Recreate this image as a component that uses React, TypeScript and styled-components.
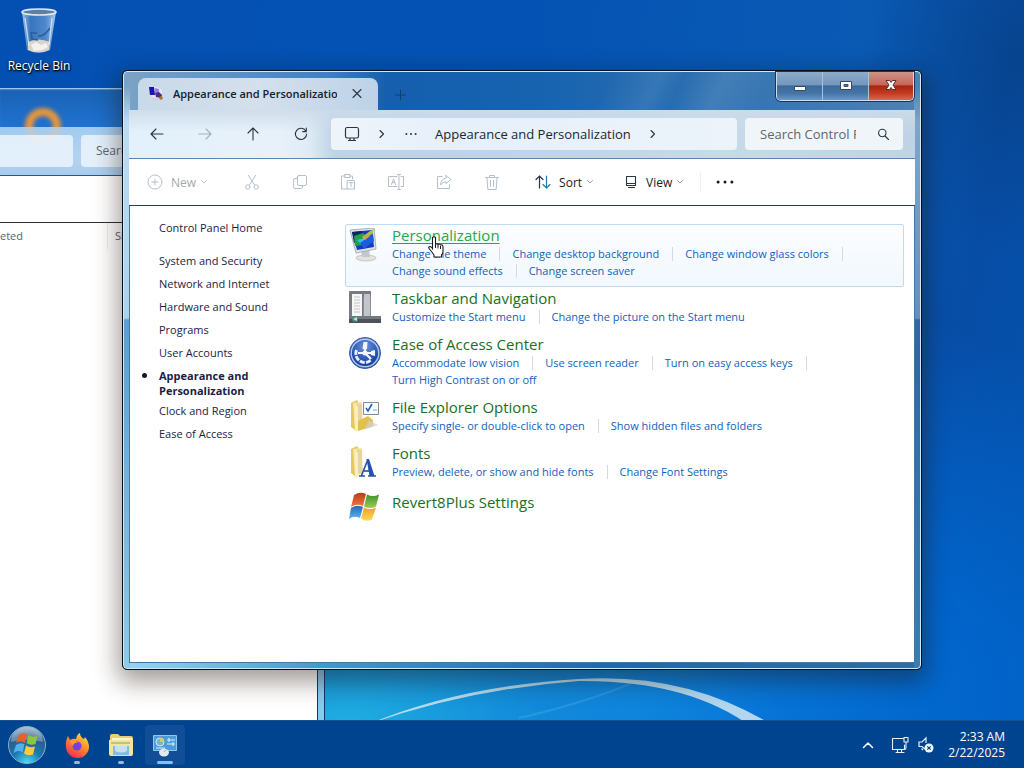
import React from "react";
import styled, { createGlobalStyle } from "styled-components";

const GlobalStyle = createGlobalStyle`
  *, *::before, *::after { box-sizing: border-box; }
  body { margin: 0; font-family: "Open Sans", "Noto Sans", sans-serif; font-size: 11px; color: #1a1a1a; }
  button { font: inherit; color: inherit; border: 0; padding: 0; background: none; }
  a { text-decoration: none; color: inherit; }
  svg { display: block; flex: none; }
`;

/* ---------- desktop ---------- */

const Desktop = styled.div`
  position: relative;
  display: flex;
  flex-direction: column;
  min-height: 100vh;
  overflow: hidden;
  background:
    radial-gradient(ellipse 42% 26% at 34% 94%, #20aee0 0%, rgba(24, 150, 220, 0.6) 45%, rgba(0, 110, 215, 0) 100%),
    radial-gradient(ellipse 66% 56% at 62% 92%, #0a7cdc 0%, rgba(0, 106, 212, 0.8) 50%, rgba(0, 90, 190, 0) 100%),
    radial-gradient(ellipse 16% 26% at 100% 8%, rgba(8, 56, 112, 0.45) 0%, rgba(8, 70, 140, 0) 100%),
    linear-gradient(100deg, #0450b2 0%, #0453b4 45%, #0a5ab4 75%, #074da6 88%, #0453ae 100%);
`;

const Swoosh = styled.svg`
  position: absolute;
  left: 36%;
  bottom: 40px;
  width: 42%;
  height: 60px;
`;

const Workspace = styled.main`
  position: relative;
  flex: 1;
`;

const DesktopIcon = styled.button`
  position: absolute;
  left: 0;
  top: 6px;
  width: 78px;
  display: flex;
  flex-direction: column;
  align-items: center;
  gap: 3px;
  color: #fff;
  font-size: 12px;
  line-height: 16px;
  white-space: nowrap;
  text-shadow: 0 1px 2px #000, 1px 1px 2px #000;
`;

/* ---------- window behind ---------- */

const BackWindow = styled.section`
  position: absolute;
  left: 0;
  top: 88px;
  bottom: 0;
  width: 325px;
  display: flex;
  flex-direction: column;
  border-top: 1px solid #9cc6ee;
  border-right: 1px solid #0c3b66;
  padding-right: 6px;
  background: linear-gradient(90deg, #4fa6d8, #86cdea);
`;

const BackTitle = styled.div`
  height: 38px;
  margin-right: -6px;
  background: linear-gradient(180deg, #1a62b4, #1f72d0);
  box-shadow: inset 0 1px 1px rgba(255, 255, 255, 0.25);
`;

const BackAddress = styled.div`
  position: relative;
  height: 49px;
  display: flex;
  align-items: center;
  gap: 8px;
  background: linear-gradient(180deg, rgba(178, 210, 244, 0.8), rgba(200, 220, 246, 0.8) 60%, rgba(184, 210, 240, 0.85));
  border-bottom: 1px solid #24588c;
`;

const BackField = styled.div<{ $grow?: boolean }>`
  height: 32px;
  width: ${(p) => (p.$grow ? "160px" : "73px")};
  border-radius: ${(p) => (p.$grow ? "4px" : "0 4px 4px 0")};
  background: rgba(240, 247, 254, 0.8);
  padding: 0 15px;
  color: #5c6670;
  font-size: 12px;
  line-height: 32px;
`;

const BackCommands = styled.div`
  height: 47px;
  background: #fff;
  border-bottom: 1px solid #24303c;
`;

const BackColumns = styled.div`
  flex: 1;
  display: flex;
  background: #fff;
  border-right: 1px solid #0c3b66;
  color: #5a636c;
  line-height: 26px;
`;

const BackColumn = styled.span<{ $first?: boolean }>`
  width: ${(p) => (p.$first ? "108px" : "auto")};
  padding-left: ${(p) => (p.$first ? "0" : "7px")};
  height: 26px;
  border-right: ${(p) => (p.$first ? "1px solid #ececec" : "0")};
`;

const Ring = styled.svg`
  position: absolute;
  left: 18px;
  top: 12px;
  filter: blur(2px);
`;

/* ---------- front window ---------- */

const Window = styled.section`
  position: absolute;
  left: 122px;
  right: 102px;
  top: 70px;
  bottom: 50px;
  display: flex;
  border: 1px solid #04101f;
  border-radius: 5px;
  background: #04101f;
  box-shadow: 0 8px 24px 4px rgba(30, 16, 8, 0.42);
`;

const Glass = styled.div`
  flex: 1;
  min-width: 0;
  display: flex;
  flex-direction: column;
  padding: 6px 5px 5px;
  border: 1px solid #cfe9f8;
  border-radius: 4px;
  background:
    linear-gradient(180deg, rgba(160, 200, 228, 0) 14px, #bcdcf2 50px, #a9d2f0 246px, #5e9ed0 248px, #8ecbe6 100%) left / 6px 100% no-repeat,
    linear-gradient(180deg, rgba(160, 200, 228, 0) 14px, #7ea6c8 50px, #5f92c4 246px, #2c68a4 248px, #3a7eb0 100%) right / 6px 100% no-repeat,
    linear-gradient(90deg, #9ad6f0, #3d9cc8 25%, #1a6cae 60%, #2a6ea6) bottom / 100% 6px no-repeat,
    linear-gradient(115deg, rgba(255, 255, 255, 0) 60%, rgba(255, 255, 255, 0.08) 66%, rgba(255, 255, 255, 0) 69%, rgba(255, 255, 255, 0.1) 74%, rgba(255, 255, 255, 0.02) 80%) top / 100% 40px no-repeat,
    linear-gradient(90deg, #7ba3c6 0%, #5f93c8 12%, #3f7fc0 26%, #155fae 33%, #1763b0 52%, #2d70b0 75%, #4a7fb2 100%);
`;

const TitleBar = styled.header`
  display: flex;
  align-items: flex-start;
  height: 32px;
  padding: 0 1px 0 9px;
`;

const Tab = styled.div`
  width: 240px;
  height: 32px;
  display: flex;
  align-items: center;
  padding: 0 13px 0 10px;
  border-radius: 8px 8px 0 0;
  background: linear-gradient(90deg, #c9d9e8, #d4e0ec 50%, #bdd2e8);
`;

const TabTitle = styled.span`
  flex: 1;
  margin: 0 12px 0 9px;
  overflow: hidden;
  white-space: nowrap;
  font-weight: 600;
  line-height: 18px;
  color: #13202e;
`;

const NewTab = styled.button`
  margin: 10px 0 0 15px;
`;

const Captions = styled.div`
  display: flex;
  margin: -6px 0 0 auto;
  height: 29px;
  border: 1px solid #cfdfee;
  border-top: 0;
  border-radius: 0 0 5px 5px;
  overflow: hidden;
  box-shadow: 0 0 0 1px #17365a;
`;

const Caption = styled.button<{ $close?: boolean }>`
  width: ${(p) => (p.$close ? "44px" : "46px")};
  display: grid;
  place-items: center;
  border-right: ${(p) => (p.$close ? "0" : "1px solid #a9c2da")};
  background: ${(p) =>
    p.$close
      ? "linear-gradient(180deg, #cf9388 0%, #c4685a 45%, #a8250f 50%, #c33a20 75%, #d9684a 100%)"
      : "linear-gradient(180deg, #8fabc8 0%, #7497bd 45%, #3c6a9c 50%, #4474a6 75%, #6d97c0 100%)"};
`;

const Client = styled.div`
  flex: 1;
  min-width: 0;
  display: flex;
  flex-direction: column;
  background: #fff;
`;

const AddressRow = styled.div`
  height: 49px;
  display: flex;
  align-items: center;
  padding: 0 12px 0 4px;
  border-bottom: 1px solid #5d86ad;
  background:
    linear-gradient(180deg, rgba(205, 219, 233, 0.9), rgba(255, 255, 255, 0) 22px),
    linear-gradient(90deg, #e2f1fc 0, #e8f1f9 150px, #deebf6 180px, #bfd3e6 205px, #bfd4e9 55%, #c8d9e8 75%, #c0d3e4 100%);
`;

const NavButton = styled.button`
  width: 48px;
  height: 32px;
  display: grid;
  place-items: center;
`;

const AddressBox = styled.nav`
  flex: 1;
  min-width: 0;
  height: 32px;
  margin: 0 8px 0 6px;
  padding: 0 13px;
  display: flex;
  align-items: center;
  border-radius: 4px;
  background: linear-gradient(90deg, #eef4fa, #e6f0fb 30%, #ecf3fa);
  white-space: nowrap;
`;

const CrumbArrow = styled.span`
  margin-left: 18px;
`;

const Crumb = styled.button`
  margin: 0 0 0 15px;
  font-size: 13px;
  line-height: 18px;
  color: #1a2733;
`;

const More = styled.button`
  margin-left: 16px;
`;

const SearchBox = styled.label`
  width: 158px;
  height: 32px;
  display: flex;
  align-items: center;
  gap: 20px;
  padding: 0 13px 0 15px;
  border-radius: 4px;
  background: #f0f5fa;
`;

const SearchInput = styled.input`
  width: 98px;
  min-width: 0;
  border: 0;
  outline: 0;
  padding: 0;
  background: transparent;
  font: inherit;
  font-size: 13px;
  &::placeholder { color: #5c6770; opacity: 1; }
`;

const CommandRow = styled.div`
  height: 47px;
  display: flex;
  align-items: center;
  padding: 0 12px;
  background: #fff;
  border-bottom: 1px solid #2c3e52;
`;

const Command = styled.button<{ $kind: "icon" | "label"; $off?: boolean }>`
  width: ${(p) => (p.$kind === "icon" ? "48px" : "auto")};
  height: 32px;
  display: flex;
  align-items: center;
  justify-content: center;
  padding: ${(p) => (p.$kind === "icon" ? "0" : "0 6px")};
  font-size: 12px;
  color: ${(p) => (p.$off ? "#a3a9ae" : "#1a1a1a")};
`;

const CommandText = styled.span`
  margin: 0 4px 0 8px;
`;

const NewCommand = styled(Command)`
  margin-right: 14px;
`;

const SortCommand = styled(Command)`
  margin: 0 18px 0 13px;
`;

const Divider = styled.span`
  width: 1px;
  height: 20px;
  margin-left: 10px;
  background: #eef0f2;
`;

const Body = styled.div`
  flex: 1;
  display: flex;
  border: 1px solid #3f79a8;
  border-top: 0;
`;

const Sidebar = styled.nav`
  width: 205px;
  flex: none;
  padding: 14px 0 0 29px;
`;

const SideList = styled.ul`
  list-style: none;
  margin: 18px 0 0;
  padding: 0;
  display: flex;
  flex-direction: column;
  gap: 8px;
`;

const SideLink = styled.a<{ $current?: boolean }>`
  position: relative;
  display: block;
  width: 120px;
  line-height: 15px;
  color: #1c1c44;
  font-weight: ${(p) => (p.$current ? 700 : 400)};
  margin-bottom: ${(p) => (p.$current ? "-3px" : "0")};
  &::before {
    content: "";
    display: ${(p) => (p.$current ? "block" : "none")};
    position: absolute;
    left: -17px;
    top: 5px;
    width: 5px;
    height: 5px;
    border-radius: 50%;
    background: #15152c;
  }
`;

const Content = styled.div`
  flex: 1;
  min-width: 0;
  padding: 18px 10px 0;
`;

const Category = styled.article<{ $hover?: boolean; $single?: boolean }>`
  position: relative;
  display: flex;
  gap: 11px;
  padding: ${(p) => (p.$single ? "3px 3px 7px" : "0 3px 7px")};
  border: 1px solid ${(p) => (p.$hover ? "#c0dbf0" : "transparent")};
  border-radius: 2px;
  background: ${(p) => (p.$hover ? "linear-gradient(180deg, #fcfdff, #f1f8fe)" : "none")};
`;

const CategoryIcon = styled.div<{ $single?: boolean }>`
  width: 32px;
  height: 32px;
  margin: ${(p) => (p.$single ? "0" : "3px 0 -8px")};
`;

const CategoryTitle = styled.a<{ $hover?: boolean }>`
  display: block;
  width: max-content;
  font-size: 15px;
  line-height: 20px;
  color: ${(p) => (p.$hover ? "#2aa648" : "#1a6f22")};
  text-decoration: ${(p) => (p.$hover ? "underline" : "none")};
  text-decoration-thickness: 1px;
  text-underline-offset: 2px;
`;

const Tasks = styled.ul`
  list-style: none;
  margin: 0;
  padding: 0;
  display: flex;
  flex-wrap: wrap;
`;

const Task = styled.li`
  display: flex;
  align-items: center;
  line-height: 17px;
  color: #0f62bc;
  white-space: nowrap;
  &:not(:last-child)::after {
    content: "";
    width: 1px;
    height: 14px;
    margin: 0 12px 0 13px;
    background: #d5dae0;
  }
`;

const Pointer = styled.svg`
  position: absolute;
  left: 81px;
  top: 10px;
`;

/* ---------- taskbar ---------- */

const Taskbar = styled.footer`
  position: relative;
  height: 48px;
  display: flex;
  align-items: center;
  padding: 0 19px 0 7px;
  background: #00438f;
  border-top: 1px solid #174f8f;
  color: #fff;
`;

const TaskButton = styled.button<{ $active?: boolean; $open?: boolean }>`
  position: relative;
  width: 40px;
  height: 40px;
  margin: 0 2px;
  display: grid;
  place-items: center;
  border-radius: 4px;
  background: ${(p) => (p.$active ? "#124e98" : "none")};
  &::after {
    content: "";
    display: ${(p) => (p.$open ? "block" : "none")};
    position: absolute;
    bottom: 1px;
    left: 50%;
    transform: translateX(-50%);
    width: ${(p) => (p.$active ? "16px" : "6px")};
    height: 3px;
    border-radius: 2px;
    background: ${(p) => (p.$active ? "#7cc4f4" : "#9cb8d8")};
  }
`;

const StartButton = styled.button`
  margin-right: 8px;
`;

const Tray = styled.div`
  margin-left: auto;
  display: flex;
  align-items: center;
`;

const TrayButton = styled.button`
  width: 26px;
  height: 32px;
  display: grid;
  place-items: center;
`;

const TrayChevron = styled(TrayButton)`
  margin-right: 6px;
`;

const Clock = styled.time`
  margin-left: 9px;
  text-align: right;
  font-size: 12px;
  line-height: 16px;
`;

/* ---------- drawings ---------- */

const Line = ({ d, w = 16, h = 16, c = "#2a3642", sw = 1.1 }: { d: string; w?: number; h?: number; c?: string; sw?: number }) => (
  <svg width={w} height={h} viewBox={`0 0 ${w} ${h}`} fill="none" stroke={c} strokeWidth={sw} strokeLinecap="round" strokeLinejoin="round" aria-hidden="true">
    <path d={d} />
  </svg>
);

const Chevron = ({ c = "#9aa1a8" }: { c?: string }) => <Line w={8} h={8} c={c} sw={1} d="M1.500 2.500 4 5 6.500 2.500" />;

const Dots = ({ r = 1, c = "#2a3642" }: { r?: number; c?: string }) => (
  <svg width="18" height="8" viewBox="0 0 18 8" fill={c} aria-hidden="true">
    <circle cx={9 - r * 4.600} cy="4" r={r} />
    <circle cx="9" cy="4" r={r} />
    <circle cx={9 + r * 4.600} cy="4" r={r} />
  </svg>
);

const BinIcon = () => (
  <svg width="40" height="49" viewBox="0 0 40 49" aria-hidden="true">
    <defs>
      <linearGradient id="bin" x1="0" x2="1">
        <stop offset="0" stopColor="#b8d4ee" stopOpacity=".9" />
        <stop offset=".25" stopColor="#4f86c4" stopOpacity=".7" />
        <stop offset=".7" stopColor="#6fa0d6" stopOpacity=".7" />
        <stop offset="1" stopColor="#c4dcf2" stopOpacity=".9" />
      </linearGradient>
    </defs>
    <path d="M3 6 8 44q12 6 23 0L37 6Z" fill="url(#bin)" />
    <path d="M9 36q10-5 22 0l-1 8q-11 5-21 0Z" fill="#d8d4cc" />
    <path d="m12 39 5-3 5 3 5-2 2 4-6 3-8 1Z" fill="#f4f2ee" />
    <path d="M31 22q-6 9-12 8M12 26l1 7 6 1M12 27h6" fill="none" stroke="#2b5c9e" strokeWidth="1.500" />
    <path d="M6 12 10 40M33 12l-3 27" stroke="#e4f0fa" strokeWidth="1.200" opacity=".8" />
    <ellipse cx="20" cy="6" rx="17" ry="3" fill="#5d7fa4" stroke="#dfeaf4" strokeWidth="1.600" />
  </svg>
);

const TabIcon = () => (
  <svg width="16" height="16" viewBox="0 0 16 16" aria-hidden="true">
    <path d="M1 1h8l5 3-1 7-9 1Z" fill="#e9e4f2" />
    <path d="M1 1h5l1 8H2Z" fill="#1c12b4" />
    <path d="m7 2 4 1v4H7Z" fill="#8d86e0" />
    <path d="m7 7 4-1 3 3-1 3-5-1Z" fill="#4b2b84" />
    <circle cx="13" cy="12" r="1.800" fill="#b3702c" />
    <path d="m4 11 6 2v2l-5-1Z" fill="#cfcfda" />
  </svg>
);

const PersonalizationIcon = () => (
  <svg width="32" height="34" viewBox="0 0 32 34" aria-hidden="true">
    <ellipse cx="17" cy="30" rx="10" ry="3" fill="#e2e2e2" stroke="#bcbcbc" strokeWidth=".8" />
    <path d="m12 22 8-1 1 8h-8Z" fill="#c4c8cc" />
    <path d="M1 2 25 0l2 21-20 4Z" fill="#dfe3e8" stroke="#9aa2aa" strokeWidth=".8" />
    <path d="M3 4 23 2l2 17-17 3Z" fill="#1238c4" />
    <path d="m3 4 10-1 3 9-11 3Z" fill="#092a5c" />
    <path d="m5 8 9-3 5 5-4 7-9 1Z" fill="#25a04a" />
    <path d="m8 12 8-2 3 4-6 3Z" fill="#2ec4ea" />
    <path d="m11 15 13-9 1 7-10 8Z" fill="#1d5be0" />
    <path d="m13 9 8-6 4-2-2 5-8 6Z" fill="#a7c445" />
    <path d="m14 10 5-4 2 2-5 4Z" fill="#d7a047" />
  </svg>
);

const TaskbarIcon = () => (
  <svg width="32" height="32" viewBox="0 0 32 32" aria-hidden="true">
    <path d="M1 0h21v27H1Z" fill="#8c9096" />
    <path d="M0 1q0-1 1-1h20q1 0 1 1v5h-8v22H0Z" fill="#787c82" />
    <path d="M3 3h10v22H3Z" fill="#f6f6f6" />
    <path d="M5 6h6M5 9h6M5 12h6M5 15h6M5 18h6M5 21h6" stroke="#c2c4c6" />
    <path d="M15 3h6v22h-6Z" fill="#c2c6ca" />
    <path d="M0 25h32v7H0Z" fill="#4c5258" />
    <path d="M0 25h32v3H0Z" fill="#717981" />
    <circle cx="6" cy="28" r="3" fill="#4a8a80" />
    <path d="m4 28 4-2v4Z" fill="#cfe0d8" />
  </svg>
);

const EaseIcon = () => (
  <svg width="32" height="32" viewBox="0 0 32 32" fill="none" aria-hidden="true">
    <defs>
      <radialGradient id="ease" cx=".5" cy=".3" r=".8">
        <stop offset="0" stopColor="#6c94e0" />
        <stop offset=".6" stopColor="#1f4cae" />
        <stop offset="1" stopColor="#102e80" />
      </radialGradient>
    </defs>
    <circle cx="16" cy="16" r="15.500" fill="url(#ease)" stroke="#3a5cae" />
    <circle cx="16" cy="16" r="13.800" stroke="#b4cbee" strokeWidth="1.400" />
    <path d="M7.500 13a9 9 0 0 0 14.500 10" stroke="#eaf1fc" strokeWidth="3" strokeDasharray="5 1.200" />
    <path d="M16 6v10h9M16 16H9M16 16l6 6" stroke="#f4f8fe" strokeWidth="2.200" />
    <path d="m13.500 12 1-7h4l-.5 7ZM22 14l4-1v6l-4-1Z" fill="#f4f8fe" />
    <circle cx="16" cy="16" r="2.500" fill="#f4f8fe" />
  </svg>
);

const FolderBase = () => (
  <>
    <path d="M2 3 8 0l2 3v26l-3 2-5-4Z" fill="#e3c861" />
    <path d="m4 3 9-1v25l-7 4Z" fill="#f6e8a4" />
    <path d="m8 3 5 1 1 24-5-1Z" fill="#dfc4a0" opacity=".6" />
    <path d="m6 5 3 2v23l-3 1Z" fill="#f9efbc" />
  </>
);

const FolderOptionsIcon = () => (
  <svg width="32" height="32" viewBox="0 0 32 32" aria-hidden="true">
    <FolderBase />
    <path d="m9 21 10-5 5 4v6l-15 5Z" fill="#e2c04a" />
    <path d="m20 20 9 5-14 5Z" fill="#d0d0cc" opacity=".7" />
    <path d="M14.500 2.500h15v12h-15Z" fill="#fbfdff" stroke="#7d8c9c" />
    <path d="m17 8 2 3 4-7" stroke="#2a64b4" strokeWidth="1.600" fill="none" />
    <path d="M24 10h4" stroke="#7fa2c4" />
  </svg>
);

const FontsIcon = () => (
  <svg width="32" height="32" viewBox="0 0 32 32" aria-hidden="true">
    <FolderBase />
    <path d="M10 30h6M19 30h8M12.500 29.500 18.500 14.500" stroke="#2450b0" strokeWidth="1.600" fill="none" />
    <path d="M17.500 13h2.500l5.500 17h-5Z" fill="#2450b0" />
    <path d="M14.500 25h6" stroke="#2450b0" strokeWidth="1.600" />
  </svg>
);

const Flag = () => (
  <svg width="32" height="32" viewBox="0 0 32 32" aria-hidden="true">
    <defs>
      <linearGradient id="fr" y2="1" x2="0"><stop stopColor="#b83c20" /><stop offset="1" stopColor="#f07a3c" /></linearGradient>
      <linearGradient id="fg" y2="1" x2="0"><stop stopColor="#3f8f2c" /><stop offset="1" stopColor="#9ccc50" /></linearGradient>
      <linearGradient id="fb" y2="1" x2="0"><stop stopColor="#2c66b8" /><stop offset="1" stopColor="#58b8ec" /></linearGradient>
      <linearGradient id="fy" y2="1" x2="0"><stop stopColor="#f0a020" /><stop offset="1" stopColor="#fcdc5c" /></linearGradient>
    </defs>
    <path d="M5 3q6-4 12-1l-3 12q-6-3-12 1Z" fill="url(#fr)" />
    <path d="M18 2.500q6 3 12 0l-3 12q-6 3-12 0Z" fill="url(#fg)" />
    <path d="M2 16q6-4 12-1l-3 11q-6-3-11 1Z" fill="url(#fb)" />
    <path d="M15 15.500q6 3 12 0l-4 12q-6 3-11-1Z" fill="url(#fy)" />
  </svg>
);

const StartOrb = () => (
  <svg width="40" height="40" viewBox="0 0 40 40" aria-hidden="true">
    <defs>
      <radialGradient id="orb" cx=".5" cy="1" r="1">
        <stop offset="0" stopColor="#4fe0f8" />
        <stop offset=".4" stopColor="#1c78b0" />
        <stop offset=".75" stopColor="#2c5a88" />
        <stop offset="1" stopColor="#8fb0c8" />
      </radialGradient>
    </defs>
    <circle cx="20" cy="20" r="18.500" fill="url(#orb)" stroke="#7fb4d4" />
    <path d="M4 17a16 15 0 0 1 32 0q-16-5-32 0Z" fill="#fff" opacity=".3" />
    <path d="M12 10q4-3 8-1l-2 9q-4-3-9 0Z" fill="#e8602c" />
    <path d="M21.500 10q4 3 9 1l-2 8q-5 2-9-1Z" fill="#8cc444" />
    <path d="M9 20q5-3 8.500-.5l-2 8q-4-3-9 .5Z" fill="#54b0f0" />
    <path d="M19 20.500q4 3 9 1l-2 8q-5 2-9-1Z" fill="#fcc83c" />
  </svg>
);

const FirefoxIcon = () => (
  <svg width="26" height="26" viewBox="0 0 26 26" aria-hidden="true">
    <defs>
      <linearGradient id="fox" x1=".8" y1="0" x2=".2" y2="1">
        <stop offset="0" stopColor="#ffe14a" />
        <stop offset=".45" stopColor="#ff8a2a" />
        <stop offset="1" stopColor="#f0245c" />
      </linearGradient>
    </defs>
    <path d="M4 4 6 8q3-2 6-1 1-5 4-6 0 4 4 6l1-2q4 5 4 10A11.500 11 0 0 1 2 15q-1-5 2-11Z" fill="url(#fox)" />
    <circle cx="13" cy="14" r="4.500" fill="#7a3ee0" />
    <path d="M6 9q5-2 8 2-4-1-5 3Z" fill="#ff9a30" />
  </svg>
);

const ExplorerIcon = () => (
  <svg width="26" height="24" viewBox="0 0 26 24" aria-hidden="true">
    <path d="M2 3q0-2 2-2h6l2 2h11q2 0 2 2v16H2Z" fill="#e6cf74" />
    <path d="M4 5h20v5H4Z" fill="#f8f4dc" />
    <path d="M1 7h24v14q0 2-2 2H3q-2 0-2-2Z" fill="#f4e596" />
    <path d="M5 13h16v9H5Z" fill="#7fc0dc" />
    <path d="M7 13h12v5q-6 3-12 0Z" fill="#c4e4ec" />
    <path d="M3 10h19" stroke="#9cc06c" strokeWidth="1.500" />
  </svg>
);

const ControlPanelIcon = () => (
  <svg width="26" height="24" viewBox="0 0 26 24" aria-hidden="true">
    <path d="M1.500 2.500h23v15h-23Z" fill="#4c9cdc" stroke="#8cc8f0" />
    <circle cx="8" cy="9" r="4" fill="#74b4c4" stroke="#cfe8f4" />
    <path d="M8 9V5a4 4 0 0 1 4 4Z" fill="#e0c85c" />
    <path d="M15 7h8M15 11h8M17 5v4M21 9v4M4 15h9" stroke="#d8eefc" strokeWidth="1.200" />
    <ellipse cx="12" cy="19.500" rx="5" ry="4" fill="#e4e8ec" />
    <path d="m12 19 3-3" stroke="#a4acb4" />
  </svg>
);

/* ---------- data ---------- */

const sideLinks = ["System and Security", "Network and Internet", "Hardware and Sound", "Programs", "User Accounts", "Appearance and Personalization", "Clock and Region", "Ease of Access"];
const currentSection = "Appearance and Personalization";

const categories: { title: string; icon: React.ReactNode; tasks: string[] }[] = [
  { title: "Personalization", icon: <PersonalizationIcon />, tasks: ["Change the theme", "Change desktop background", "Change window glass colors", "Change sound effects", "Change screen saver"] },
  { title: "Taskbar and Navigation", icon: <TaskbarIcon />, tasks: ["Customize the Start menu", "Change the picture on the Start menu"] },
  { title: "Ease of Access Center", icon: <EaseIcon />, tasks: ["Accommodate low vision", "Use screen reader", "Turn on easy access keys", "Turn High Contrast on or off"] },
  { title: "File Explorer Options", icon: <FolderOptionsIcon />, tasks: ["Specify single- or double-click to open", "Show hidden files and folders"] },
  { title: "Fonts", icon: <FontsIcon />, tasks: ["Preview, delete, or show and hide fonts", "Change Font Settings"] },
  { title: "Revert8Plus Settings", icon: <Flag />, tasks: [] },
];

const off = "#b4c0ca";
const fileCommands = [
  { name: "Cut", d: "M4.500 1.500 10.500 11M11.500 1.500 5.500 11M6 13a2.200 2.200 0 1 1-4.400 0 2.200 2.200 0 0 1 4.400 0M14.400 13a2.200 2.200 0 1 1-4.400 0 2.200 2.200 0 0 1 4.400 0" },
  { name: "Copy", d: "M7 1.500h6q1.500 0 1.500 1.500v7q0 1.500-1.500 1.500H7Q5.500 11.500 5.500 10V3Q5.500 1.500 7 1.500M5.500 4.500H3Q1.500 4.500 1.500 6v7q0 1.500 1.500 1.500h6q1.500 0 1.500-1.500v-1.500" },
  { name: "Paste", d: "M5 2H1.500v13H7M10 2h2.500v3M5 .5h5v3H5ZM7.500 6.500h7V15h-7ZM9.500 8.500h3M11 8.500v4" },
  { name: "Rename", d: "M9 2.500H.5v10H9M13 2.500h2.500v10H13M11 .5v15M9.500 .5h3M9.500 15.500h3M3.500 10.500 5.500 5l2 5.500M4.300 8.500h2.400" },
  { name: "Share", d: "M6 2.500H1.500v12h12V11M10 1.500 15 5.500l-5 4V8Q6 8 4.500 11 5 4.500 10 4Z" },
  { name: "Delete", d: "M1.500 3.500h13M5.500 3.500V1.500h5v2M3 3.500l.8 12h8.400l.8-12M6.500 6.500v6M9.500 6.500v6" },
];

export default function App() {
  return (
    <>
      <GlobalStyle />
      <Desktop>
        <Swoosh viewBox="0 0 430 60" preserveAspectRatio="none" aria-hidden="true">
          <path d="M0 56Q90 18 210 11 320 4 408 60H384Q320 12 210 13 100 21 0 56Z" fill="#cfe6f2" opacity=".85" />
          <path d="M150 50Q220 34 270 12" stroke="#7fd0ec" strokeWidth="2" opacity=".2" fill="none" />
        </Swoosh>
        <Workspace>
          <DesktopIcon>
            <BinIcon />
            Recycle Bin
          </DesktopIcon>

          <BackWindow aria-label="Folder">
            <BackTitle />
            <Ring width="50" height="50" viewBox="0 0 50 50" aria-hidden="true">
              <circle cx="25" cy="25" r="14" fill="none" stroke="#e8963c" strokeWidth="8" />
            </Ring>
            <BackAddress>
              <BackField />
              <BackField $grow>Search</BackField>
            </BackAddress>
            <BackCommands />
            <BackColumns>
              <BackColumn $first>eted</BackColumn>
              <BackColumn>Size</BackColumn>
            </BackColumns>
          </BackWindow>

          <Window aria-label="Appearance and Personalization">
            <Glass>
              <TitleBar>
                <Tab>
                  <TabIcon />
                  <TabTitle>Appearance and Personalization</TabTitle>
                  <button aria-label="Close tab"><Line w={16} h={16} d="M4 3.500l8 8M12 3.500l-8 8" /></button>
                </Tab>
                <NewTab aria-label="New tab"><Line w={14} h={14} c="#12406c" sw={1} d="M7.500 2v10M2.500 7h10" /></NewTab>
                <Captions>
                  <Caption aria-label="Minimize">
                    <svg width="16" height="14" viewBox="0 0 16 14"><path d="M2.500 7.500h11v4h-11Z" fill="#fff" stroke="#3a4c62" /></svg>
                  </Caption>
                  <Caption aria-label="Maximize">
                    <svg width="16" height="14" viewBox="0 0 16 14"><path d="M2.500 2.500h11v8h-11ZM6 5.500v2h4v-2Z" fillRule="evenodd" fill="#fff" stroke="#3a4c62" /></svg>
                  </Caption>
                  <Caption $close aria-label="Close">
                    <svg width="16" height="14" viewBox="0 0 16 14"><path d="M3 1.500h3.500L8 3.500l1.500-2H13L10 6l3 4.500H9.500L8 8.500l-1.500 2H3L6 6Z" fill="#fff" stroke="#5a2c2c" /></svg>
                  </Caption>
                </Captions>
              </TitleBar>

              <Client>
                <AddressRow>
                  <NavButton aria-label="Back"><Line d="M14 8H2M7 3 2 8l5 5" /></NavButton>
                  <NavButton aria-label="Forward"><Line c="#a3b0bc" d="M2 8h12M9 3l5 5-5 5" /></NavButton>
                  <NavButton aria-label="Up"><Line d="M8 14V2M3 7l5-5 5 5" /></NavButton>
                  <NavButton aria-label="Refresh"><Line d="M12.800 5A5.600 5.600 0 1 0 13.600 8M13.300 2v3.600H9.700" /></NavButton>
                  <AddressBox aria-label="Address">
                    <Line sw={1.200} d="M3 1.500h10q1.500 0 1.500 2V10q0 2-1.500 2H3q-1.500 0-1.500-2V3.500q0-2 1.500-2M6 12v2.500M10 12v2.500M4.500 14.500h7" />
                    <CrumbArrow><Line w={8} h={10} d="M2 1.500 5.500 5 2 8.500" /></CrumbArrow>
                    <More aria-label="More locations"><Dots /></More>
                    <Crumb>Appearance and Personalization</Crumb>
                    <CrumbArrow><Line w={8} h={10} d="M2 1.500 5.500 5 2 8.500" /></CrumbArrow>
                  </AddressBox>
                  <SearchBox>
                    <SearchInput type="text" placeholder="Search Control Panel" aria-label="Search Control Panel" />
                    <Line w={14} h={14} d="M10 6a3.700 3.700 0 1 1-7.400 0A3.700 3.700 0 0 1 10 6M9 9l3.500 3.500" />
                  </SearchBox>
                </AddressRow>

                <CommandRow>
                  <NewCommand $kind="label" $off>
                    <Line c={off} sw={1} d="M15 8A7 7 0 1 1 1 8a7 7 0 0 1 14 0M8 5v6M5 8h6" />
                    <CommandText>New</CommandText>
                    <Chevron c={off} />
                  </NewCommand>
                  {fileCommands.map((c) => (
                    <Command key={c.name} $kind="icon" $off aria-label={c.name}>
                      <Line c={off} sw={1} d={c.d} />
                    </Command>
                  ))}
                  <SortCommand $kind="label">
                    <svg width="16" height="16" viewBox="0 0 16 16" fill="none" strokeWidth="1.200" strokeLinecap="round" aria-hidden="true">
                      <path d="M4.500 14V2M1 5.500 4.500 2 8 5.500" stroke="#2a3642" />
                      <path d="M11.500 2v12M8 10.500l3.500 3.500 3.500-3.500" stroke="#1a78b4" />
                    </svg>
                    <CommandText>Sort</CommandText>
                    <Chevron />
                  </SortCommand>
                  <Command $kind="label">
                    <Line w={14} h={14} d="M2.500 1.500h9v7h-9ZM2.500 8.500v2h9v-2M4.500 12.500h6" />
                    <CommandText>View</CommandText>
                    <Chevron />
                  </Command>
                  <Divider />
                  <Command $kind="icon" aria-label="See more"><Dots r={1.500} c="#1a1a1a" /></Command>
                </CommandRow>

                <Body>
                  <Sidebar aria-label="Control Panel">
                    <SideLink href="#home">Control Panel Home</SideLink>
                    <SideList>
                      {sideLinks.map((s) => (
                        <li key={s}><SideLink href="#section" $current={s === currentSection}>{s}</SideLink></li>
                      ))}
                    </SideList>
                  </Sidebar>
                  <Content>
                    {categories.map((c, i) => (
                      <Category key={c.title} $hover={i === 0} $single={c.tasks.length === 0}>
                        <CategoryIcon $single={c.tasks.length === 0}>{c.icon}</CategoryIcon>
                        <div>
                          <CategoryTitle href="#category" $hover={i === 0}>{c.title}</CategoryTitle>
                          <Tasks>
                            {c.tasks.map((t) => <Task key={t}><a href="#task">{t}</a></Task>)}
                          </Tasks>
                        </div>
                        {i === 0 && (
                          <Pointer width="18" height="24" viewBox="0 0 18 24" aria-hidden="true">
                            <path d="M5.500 2.500q1.500-1.500 3 0v7q1-1.500 2.500 0 1.500-1.200 2.500.5 2-.8 2.500 1.500v5q0 2-1.500 3.500v2H7v-2Q5 17 2 13.500q-.8-2 1-2 1.500.3 2.500 2Z" fill="#fff" stroke="#1a1a1a" strokeWidth="1.100" />
                            <path d="M8.500 9v4M11 10v3.500M13.500 11v3" stroke="#1a1a1a" />
                          </Pointer>
                        )}
                      </Category>
                    ))}
                  </Content>
                </Body>
              </Client>
            </Glass>
          </Window>
        </Workspace>

        <Taskbar>
          <StartButton aria-label="Start"><StartOrb /></StartButton>
          <TaskButton $open aria-label="Firefox"><FirefoxIcon /></TaskButton>
          <TaskButton $open aria-label="File Explorer"><ExplorerIcon /></TaskButton>
          <TaskButton $open $active aria-label="Control Panel"><ControlPanelIcon /></TaskButton>
          <Tray>
            <TrayChevron aria-label="Show hidden icons"><Line w={14} h={10} c="#fff" sw={1.500} d="M2.500 7.500 7 3l4.500 4.500" /></TrayChevron>
            <TrayButton aria-label="Network">
              <Line w={18} h={18} c="#e4f2fc" d="M12 2.500H1.500v11h12V9M5 16.500h8M6.500 13.500v3M10.500 13.500v3M13 1.500h4v4.500h-4ZM15 6v6q0 1.500-1.500 1.500" />
            </TrayButton>
            <TrayButton aria-label="Volume">
              <svg width="18" height="18" viewBox="0 0 18 18" fill="none" stroke="#e4f2fc" strokeWidth="1.200" aria-hidden="true">
                <path d="M8 13 5 10.500H2V6h3l4-4v5M4.500 12.500l1.500 1.500" />
                <circle cx="12" cy="12" r="4.500" fill="#eef6fc" stroke="none" />
                <path d="m10.300 10.300 3.400 3.400M13.700 10.300l-3.400 3.400" stroke="#00438f" />
              </svg>
            </TrayButton>
            <Clock>2:33 AM<br />2/22/2025</Clock>
          </Tray>
        </Taskbar>
      </Desktop>
    </>
  );
}
